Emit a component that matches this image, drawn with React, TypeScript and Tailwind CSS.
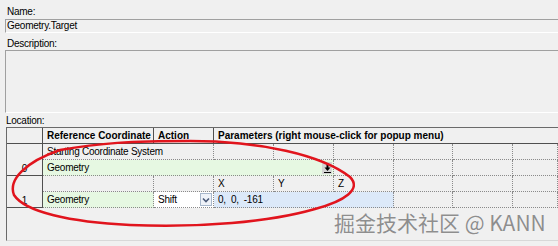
import React from 'react';

const hdr = 'border-r border-b border-[#505050] bg-[#f0f0f0] font-bold tracking-normal pl-[4px] leading-[15px] whitespace-nowrap overflow-hidden';
const cell = 'border-r border-b border-dotted border-[#8a8a8a] pl-[4px] leading-[15px] whitespace-nowrap overflow-hidden';
const rowHdr = 'row-span-2 border-r border-b border-[#505050] bg-[#f0f0f0] flex items-end justify-center';

const DropArrow: React.FC = () => (
  <svg width="9" height="10" viewBox="0 0 9 10">
    <path d="M4.5 0.5 V6" stroke="#000" strokeWidth="2" />
    <path d="M1.5 4.5 L4.5 8 L7.5 4.5 Z" fill="#000" />
    <path d="M1 9.5 H8" stroke="#000" strokeWidth="1" />
  </svg>
);

const App: React.FC = () => {
  const empty = (n: number) => Array.from({ length: n }).map((_, i) => <div key={i} className={cell} />);

  return (
    <div className="relative w-[558px] h-[246px] overflow-hidden bg-[#f0f0f0] text-black text-[10px] tracking-[-0.25px] font-['Liberation_Sans',sans-serif]">
      <div className="h-[19px] pl-[7px] pt-[5px] leading-[13px]">Name:</div>
      <div className="ml-[5px] h-[14px] border-t border-l border-[#a0a0a0] border-b border-b-white pl-[1px] leading-[12px]">
        Geometry.Target
      </div>
      <div className="h-[17px] pl-[7px] pt-[4px] leading-[13px]">Description:</div>
      <div className="ml-[5px] h-[63px] border-t border-l border-[#a0a0a0] border-b border-b-white" />
      <div className="h-[14px] pl-[6px] pt-[2px] leading-[12px]">Location:</div>

      <div className="ml-[6px] h-[114px] border-l border-t border-[#6a6a6a] border-b border-b-[#d8d8d8]">
        <div className="grid grid-cols-[36px_111px_60px_60px_60px_60px_59px_60px_1fr] grid-rows-[16px_16px_16px_16px_16px]">
          {/* header */}
          <div className={hdr} />
          <div className={hdr}>Reference Coordinate</div>
          <div className={hdr}>Action</div>
          <div className={`${hdr} col-span-6 border-r-0`}>Parameters (right mouse-click for popup menu)</div>

          {/* row 0 */}
          <div className={rowHdr}>
            <span className="leading-[11px] mb-[1px]">0</span>
          </div>
          <div className={`${cell} col-span-2`}>Starting Coordinate System</div>
          {empty(6)}
          <div className={`${cell} col-span-4 bg-[#e6f8e2] flex items-center justify-between pr-[1px]`}>
            <span>Geometry</span>
            <span className="w-[10px] h-[12px] bg-[#d4d4d4] flex items-center justify-center">
              <DropArrow />
            </span>
          </div>
          {empty(4)}

          {/* row 1 */}
          <div className={rowHdr}>
            <span className="leading-[11px] mb-[1px]">1</span>
          </div>
          <div className={cell} />
          <div className={cell} />
          <div className={cell}>X</div>
          <div className={cell}>Y</div>
          <div className={cell}>Z</div>
          {empty(3)}
          <div className={`${cell} bg-[#e6f8e2]`}>Geometry</div>
          <div className={`${cell} bg-white flex items-center justify-between pr-[1px]`}>
            <span>Shift</span>
            <span className="w-[12px] h-[13px] border border-[#a8b8cc] bg-[#eef2f8] flex items-center justify-center">
              <svg width="8" height="6" viewBox="0 0 8 6">
                <path d="M1 1.5 L4 4.5 L7 1.5" stroke="#4a5a78" strokeWidth="1.6" fill="none" />
              </svg>
            </span>
          </div>
          <div className={`${cell} col-span-3 bg-[#dce9f9]`}>0,&nbsp; 0,&nbsp; -161</div>
          {empty(3)}
        </div>
      </div>

      {/* red hand-drawn ellipse */}
      <svg className="absolute inset-0 pointer-events-none" width="558" height="246" viewBox="0 0 558 246">
        <path
          d="M 60 150 C 100 143, 130 141, 190 141 C 260 141, 322 155, 350 177 C 362 189, 345 201, 315 209 C 270 222, 200 228, 130 225 C 70 222, 25 212, 14 195 C 8 180, 25 162, 60 150"
          fill="none"
          stroke="#e1141d"
          strokeWidth="2.5"
        />
      </svg>

      {/* watermark */}
      <div className="absolute left-[334px] top-[207px] text-[21px] leading-[30px] tracking-normal text-[#8e8e8e] whitespace-nowrap font-['Noto_Sans_CJK_SC',sans-serif] [text-shadow:0_0_1px_#ffffff]">
        掘金技术社区 @ KANN
      </div>
    </div>
  );
};

export default App;
